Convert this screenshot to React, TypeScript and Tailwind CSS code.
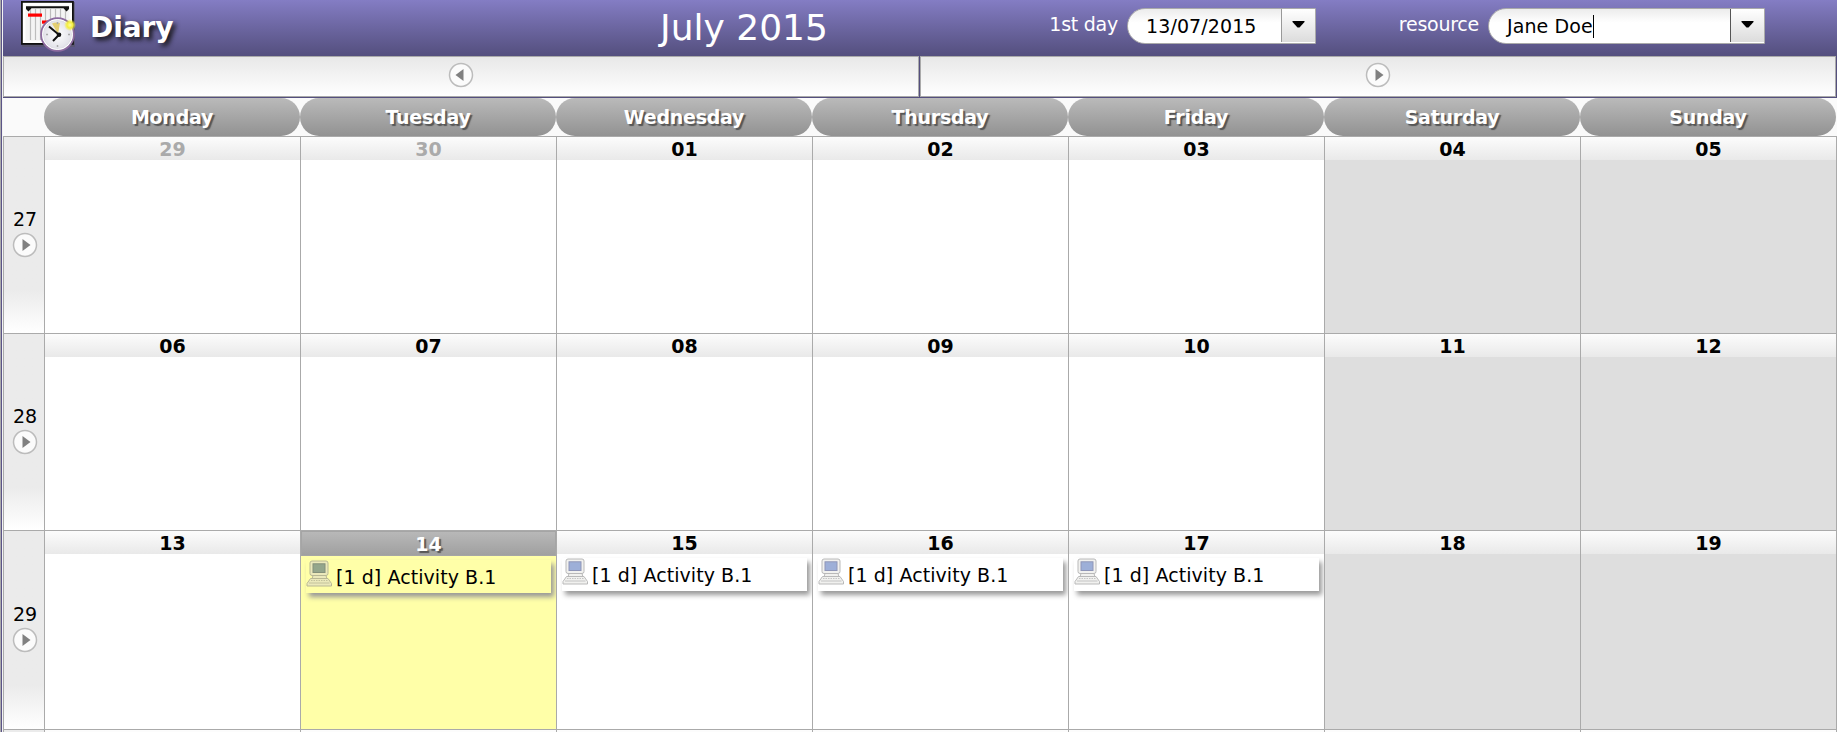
import React from 'react';

const DAYS = ['Monday', 'Tuesday', 'Wednesday', 'Thursday', 'Friday', 'Saturday', 'Sunday'];

const WEEKS = [
  { week: '27', height: 'h-[197px]', numPad: 'pt-[72px]', days: ['29', '30', '01', '02', '03', '04', '05'] },
  { week: '28', height: 'h-[197px]', numPad: 'pt-[72px]', days: ['06', '07', '08', '09', '10', '11', '12'] },
  { week: '29', height: 'h-[199px]', numPad: 'pt-[73px]', days: ['13', '14', '15', '16', '17', '18', '19'] },
];

const BUSY = ['14', '15', '16', '17'];

function DiaryLogo() {
  return (
    <svg width="56" height="52" viewBox="0 0 56 52" className="shrink-0">
      <defs>
        <radialGradient id="face">
          <stop offset="0" stopColor="#fff" />
          <stop offset="0.8" stopColor="#e4e4ea" />
          <stop offset="1" stopColor="#cfcfd8" />
        </radialGradient>
        <radialGradient id="spark">
          <stop offset="0" stopColor="#fffca0" />
          <stop offset="0.5" stopColor="#f4ee3c" />
          <stop offset="1" stopColor="#f4ee3c" stopOpacity="0" />
        </radialGradient>
      </defs>
      <rect x="2" y="2" width="53" height="45" fill="#555" opacity="0.45" />
      <rect x="1.900" y="1.900" width="51" height="42" fill="#fff" stroke="#111" strokeWidth="1.800" />
      <rect x="5.500" y="5.500" width="44" height="35" fill="#f4f4f4" />
      <path d="M10.500 9v31M15.500 9v31M20.500 9v31M25.500 9v31M30.500 9v31M35.500 9v31M40.500 9v31M45.500 9v31" stroke="#bdbdbd" strokeWidth="1.200" />
      <path d="M6 6.200H49V9L46.500 11.500L43.500 8.200H11.500L8.500 11.500L6 9Z" fill="#111" />
      <rect x="8" y="13.500" width="14" height="3.200" fill="#f00" />
      <rect x="22" y="20.500" width="10" height="3.200" fill="#f00" />
      <circle cx="37.500" cy="34.500" r="16.400" fill="url(#face)" stroke="#8d6ba0" strokeWidth="1.800" />
      <circle cx="37.500" cy="34.500" r="15" fill="none" stroke="#fff" strokeWidth="1" />
      <path d="M38 34L32 23.500A12 12 0 0 1 40 23Z" fill="#e3ce72" />
      <path d="M37.500 22v2M37.500 45v2M26 34.500h2M48 34.500h2" stroke="#aaa" strokeWidth="1.500" />
      <path d="M29 26.500L39 34.800L33 41" fill="none" stroke="#111" strokeWidth="2" />
      <circle cx="39" cy="34.800" r="2.300" fill="#111" />
      <circle cx="50" cy="25" r="6" fill="url(#spark)" />
    </svg>
  );
}

function Arrow({ left = false }: { left?: boolean }) {
  return (
    <svg width="26" height="26" viewBox="0 0 26 26" className={left ? '-scale-x-100' : ''}>
      <circle cx="13" cy="13" r="11.500" fill="#fbfbfb" stroke="#bcbcbc" strokeWidth="1.500" />
      <path d="M10.500 7L18.500 13L10.500 19Z" fill="#808080" />
    </svg>
  );
}

function Computer({ today }: { today: boolean }) {
  const line = today ? '#b9b894' : '#b9b9b9';
  return (
    <svg width="27" height="27" viewBox="0 0 27 27" className="shrink-0">
      <g stroke={line} fill={today ? '#ebe9bb' : '#f1f1ef'}>
        <path d="M7 15.500h13l1 3.500H6z" />
        <path d="M4.500 18.500H22L25.500 23.500V26H1V23.500Z" strokeLinejoin="round" />
        <rect x="4" y="1" width="18" height="14.500" rx="2" />
      </g>
      <rect x="7" y="3.800" width="12" height="8.700" fill={today ? '#94a68c' : '#9dafd8'} stroke={today ? '#84907a' : '#8f96b8'} />
      <path d="M5 20.500h16.500" stroke={line} strokeWidth="0.800" strokeDasharray="1.500 1" />
      <path d="M3 23h20.500" stroke={line} strokeWidth="0.800" />
    </svg>
  );
}

function Task({ today }: { today: boolean }) {
  return (
    <div className={`mt-[4px] ml-[5px] flex h-[33px] w-[245px] shadow-[3px_4px_5px_#999] ${today ? 'bg-[#ffffa8]' : 'bg-white'}`}>
      <Computer today={today} />
      <span className="ml-[3px] text-[19px] leading-[35px] tracking-[0.06px] whitespace-nowrap">[1 d] Activity B.1</span>
    </div>
  );
}

function Picker({ value, width, focused = false }: { value: string; width: string; focused?: boolean }) {
  return (
    <div className={`flex h-[36px] overflow-hidden rounded-l-[18px] border border-[#aaa] bg-gradient-to-b from-[#ececec] to-white to-40% text-black ${width}`}>
      <div className="flex grow items-center pl-[18px] text-[19px] leading-none tracking-[0.1px]">
        <span className="whitespace-nowrap">{value}</span>
        {focused && <span className="h-[23px] w-px bg-black" />}
      </div>
      <div className={`mb-px flex w-[34px] justify-center border-l bg-gradient-to-b from-white to-[#dcdcdc] pt-[12px] ${focused ? 'border-[#555]' : 'border-[#999]'}`}>
        <svg width="13" height="7" viewBox="0 0 13 7"><path d="M0.500 0h12v1L7.500 6.500h-2L0.500 1z" /></svg>
      </div>
    </div>
  );
}

export default function App() {
  return (
    <div className="flex h-[732px] w-[1837px] overflow-hidden bg-white font-['DejaVu_Sans',sans-serif] text-black">
      <div className="w-[3px] shrink-0 border-r border-l border-r-[#f4f4f4] border-l-[#aaa] bg-[#5b5488]" />
      <div className="flex w-[1834px] shrink-0 flex-col">
        <header className="flex h-[56px] shrink-0 bg-gradient-to-b from-[#847dc4] to-[#544f7e] text-white">
          <div className="flex w-[601px] pl-[17px]">
            <DiaryLogo />
            <h1 className="ml-[14px] text-[28px] leading-[55px] font-bold tracking-[-0.1px] [text-shadow:3px_3px_5px_#111]">Diary</h1>
          </div>
          <div className="w-[280px] text-center text-[36px] leading-[55px] whitespace-nowrap">July 2015</div>
          <div className="flex w-[243px] justify-end pr-[9px] text-[19px] leading-[48px] tracking-[-0.25px]">1st day</div>
          <div className="pt-[8px]"><Picker value="13/07/2015" width="w-[189px]" /></div>
          <div className="flex w-[172px] justify-end pr-[9px] text-[19px] leading-[48px] tracking-[-0.25px]">resource</div>
          <div className="pt-[8px]"><Picker value="Jane Doe" width="w-[277px]" focused /></div>
        </header>

        <nav className="flex h-[42px] shrink-0 gap-px border-b border-[#544f7e] bg-[#544f7e] pr-px">
          <div className="flex w-[916px] items-center justify-center border border-[#aaa] bg-gradient-to-b from-[#e8e8e8] to-white pb-[3px]"><Arrow left /></div>
          <div className="flex w-[916px] items-center justify-center border border-[#aaa] bg-gradient-to-b from-[#e8e8e8] to-white pb-[3px]"><Arrow /></div>
        </nav>

        <div className="flex h-[38px] shrink-0 bg-[#fafafa] pl-[41px]">
          {DAYS.map((d) => (
            <div key={d} className="w-[256px] rounded-[19px] bg-gradient-to-b from-[#bababa] to-[#929292] text-center text-[19px] leading-[38px] font-bold tracking-[-0.25px] text-white [text-shadow:2px_2px_1px_#555]">
              {d}
            </div>
          ))}
        </div>

        {WEEKS.map((w) => (
          <div key={w.week} className={`flex shrink-0 border-t border-[#aaa] ${w.height}`}>
            <div className={`flex w-[41px] flex-col items-center border-l border-[#aaa] bg-gradient-to-b from-[#ebebeb] from-78% to-white pl-[2px] ${w.numPad}`}>
              <span className="text-[19px] leading-[21px]">{w.week}</span>
              <div className="mt-[2px]"><Arrow /></div>
            </div>
            {w.days.map((d, i) => {
              const today = d === '14';
              const muted = w.week === '27' && i < 2;
              return (
                <div key={d} className={`w-[256px] border-l border-[#aaa] ${today ? 'bg-[#ffffa8]' : i > 4 ? 'bg-[#dedede]' : 'bg-white'}`}>
                  {today ? (
                    <div className="h-[25px] border border-[#a5a5a5] bg-gradient-to-b from-[#b8b8b8] to-[#a0a0a0] text-center text-[19px] leading-[25px] font-bold text-white [text-shadow:2px_2px_1px_#555]">{d}</div>
                  ) : (
                    <div className={`h-[23px] bg-gradient-to-b from-[#fcfcfc] to-[#e9e9e9] text-center text-[19px] leading-[24px] font-bold ${muted ? 'text-[#aaa]' : ''}`}>{d}</div>
                  )}
                  {BUSY.includes(d) && <Task today={today} />}
                </div>
              );
            })}
            <div className="w-px bg-[#aaa]" />
          </div>
        ))}
        <div className="flex h-[3px] border-t border-[#aaa]">
          <div className="w-[41px] border-l border-[#aaa] bg-[#ebebeb]" />
          {DAYS.map((d) => (
            <div key={d} className="w-[256px] border-l border-[#aaa] bg-[#fcfcfc]" />
          ))}
          <div className="w-px bg-[#aaa]" />
        </div>
      </div>
    </div>
  );
}
